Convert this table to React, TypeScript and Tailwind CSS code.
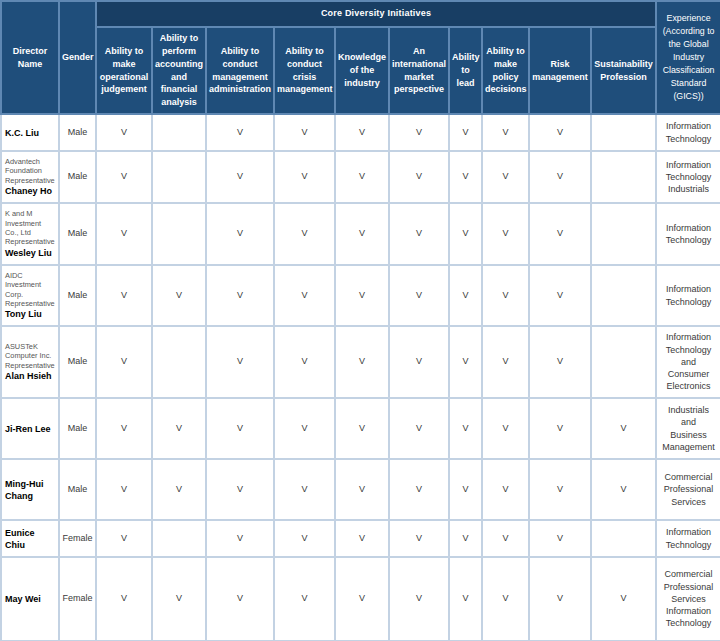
import React from "react";

const colWidths = [58, 37, 56, 54, 68, 61, 54, 60, 33, 47, 62, 65, 65];

const skills = [
  "Ability to make operational judgement",
  "Ability to perform accounting and financial analysis",
  "Ability to conduct management administration",
  "Ability to conduct crisis management",
  "Knowledge of the industry",
  "An international market perspective",
  "Ability to lead",
  "Ability to make policy decisions",
  "Risk management",
  "Sustainability Profession",
];

interface Director {
  org?: string[];
  name: string[];
  gender: string;
  marks: boolean[];
  experience: string[];
  height: number;
}

const all = (...skip: number[]) => skills.map((_, i) => !skip.includes(i));

const directors: Director[] = [
  { name: ["K.C. Liu"], gender: "Male", marks: all(1, 9), experience: ["Information", "Technology"], height: 37 },
  {
    org: ["Advantech", "Foundation", "Representative"],
    name: ["Chaney Ho"],
    gender: "Male",
    marks: all(1, 9),
    experience: ["Information", "Technology", "Industrials"],
    height: 52,
  },
  {
    org: ["K and M", "Investment", "Co., Ltd", "Representative"],
    name: ["Wesley Liu"],
    gender: "Male",
    marks: all(1, 9),
    experience: ["Information", "Technology"],
    height: 62,
  },
  {
    org: ["AIDC", "Investment", "Corp.", "Representative"],
    name: ["Tony Liu"],
    gender: "Male",
    marks: all(9),
    experience: ["Information", "Technology"],
    height: 61,
  },
  {
    org: ["ASUSTeK", "Computer Inc.", "Representative"],
    name: ["Alan Hsieh"],
    gender: "Male",
    marks: all(1, 9),
    experience: ["Information", "Technology", "and", "Consumer", "Electronics"],
    height: 72,
  },
  { name: ["Ji-Ren Lee"], gender: "Male", marks: all(), experience: ["Industrials", "and", "Business", "Management"], height: 61 },
  { name: ["Ming-Hui", "Chang"], gender: "Male", marks: all(), experience: ["Commercial", "Professional", "Services"], height: 61 },
  { name: ["Eunice", "Chiu"], gender: "Female", marks: all(1, 9), experience: ["Information", "Technology"], height: 37 },
  {
    name: ["May Wei"],
    gender: "Female",
    marks: all(),
    experience: ["Commercial", "Professional", "Services", "Information", "Technology"],
    height: 84,
  },
];

const headCell =
  "border-2 border-[#5f88b3] bg-[#1f4e7b] text-white font-bold text-[9px] text-center align-middle px-[2px] py-0 leading-[12.8px]";
const bodyCell = "border-2 border-[#c3d2e3] text-center align-middle text-[#3a3a3a] text-[9px] p-0";

export default function App() {
  return (
    <div
      className="w-[720px] h-[641px] bg-white overflow-hidden"
      style={{ fontFamily: "'Liberation Sans', Arial, sans-serif" }}
    >
      <table className="table-fixed border-collapse w-[720px]">
        <colgroup>
          {colWidths.map((w, i) => (
            <col key={i} style={{ width: w }} />
          ))}
        </colgroup>
        <thead>
          <tr className="h-[26px]">
            <th rowSpan={2} className={headCell}>
              Director
              <br />
              Name
            </th>
            <th rowSpan={2} className={headCell}>
              Gender
            </th>
            <th
              colSpan={10}
              className="border-2 border-[#5f88b3] bg-[#183e64] text-white font-bold text-[9px] text-center align-middle tracking-[0.2px] p-0"
            >
              Core Diversity Initiatives
            </th>
            <th
              rowSpan={2}
              className="border-2 border-[#5f88b3] bg-[#1f4e7b] text-white font-normal text-[8.8px] text-center align-middle px-[2px] py-0 leading-[13px]"
            >
              Experience (According to the Global Industry Classification Standard (GICS))
            </th>
          </tr>
          <tr className="h-[87px]">
            {skills.map((s) => (
              <th key={s} className={headCell}>
                {s}
              </th>
            ))}
          </tr>
        </thead>
        <tbody>
          {directors.map((d) => (
            <tr key={d.name.join(" ")} style={{ height: d.height }}>
              <td className="border-2 border-[#c3d2e3] align-middle text-left px-[3px] py-0">
                {d.org && (
                  <div className="text-[7.4px] leading-[9.3px] text-[#555555] whitespace-nowrap">
                    {d.org.map((l) => (
                      <div key={l}>{l}</div>
                    ))}
                  </div>
                )}
                <div className="text-[9px] leading-[12px] font-bold text-black whitespace-nowrap">
                  {d.name.map((l) => (
                    <div key={l}>{l}</div>
                  ))}
                </div>
              </td>
              <td className={bodyCell}>{d.gender}</td>
              {d.marks.map((m, i) => (
                <td key={i} className={bodyCell}>
                  {m ? "V" : ""}
                </td>
              ))}
              <td className={`${bodyCell} leading-[12.2px]`}>
                {d.experience.map((l, i) => (
                  <div key={i}>{l}</div>
                ))}
              </td>
            </tr>
          ))}
        </tbody>
      </table>
    </div>
  );
}
